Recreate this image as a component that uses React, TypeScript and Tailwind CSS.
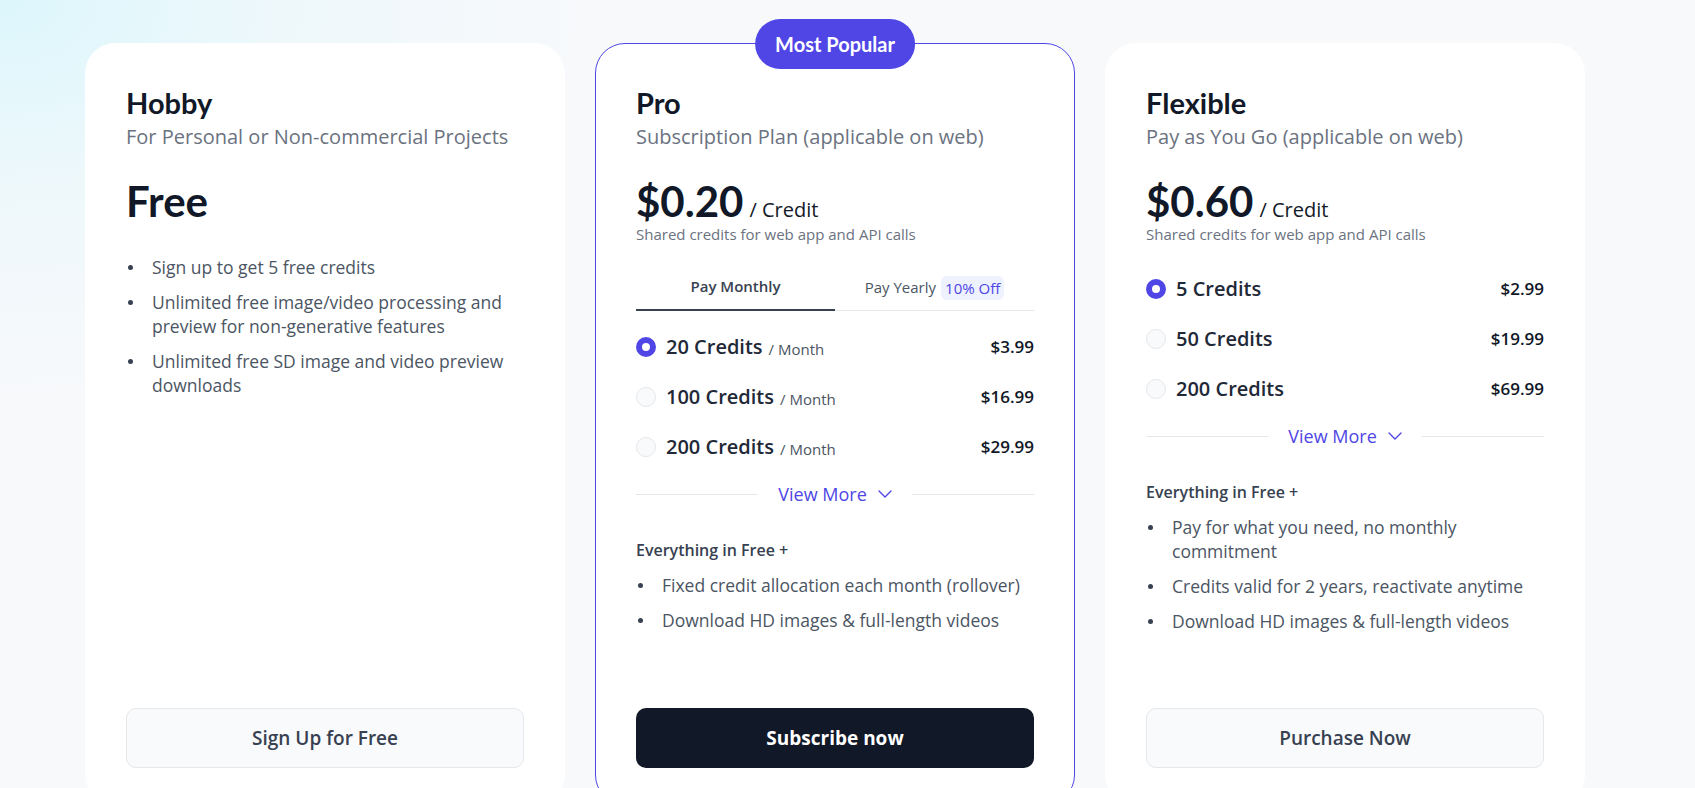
import React from "react";

type Option = { label: string; per?: string; price: string; selected?: boolean };

const proOptions: Option[] = [
  { label: "20 Credits", per: "/ Month", price: "$3.99", selected: true },
  { label: "100 Credits", per: "/ Month", price: "$16.99" },
  { label: "200 Credits", per: "/ Month", price: "$29.99" },
];

const flexOptions: Option[] = [
  { label: "5 Credits", price: "$2.99", selected: true },
  { label: "50 Credits", price: "$19.99" },
  { label: "200 Credits", price: "$69.99" },
];

function Heading({ title, subtitle }: { title: string; subtitle: string }) {
  return (
    <div>
      <h2 className="font-['Lato',sans-serif] text-[29px] leading-9 font-bold text-[#111827]">{title}</h2>
      <p className="mt-0.5 text-[20px] leading-7 text-[#6b7280]">{subtitle}</p>
    </div>
  );
}

function Price({ value, unit }: { value: string; unit?: string }) {
  return (
    <div className="mt-[29px] flex items-baseline">
      <span className="font-['Lato',sans-serif] text-[42px] leading-none font-bold text-[#111827]">{value}</span>
      {unit && <span className="ml-1.5 text-[20px] leading-none font-medium text-[#111827]">{unit}</span>}
    </div>
  );
}

function Shared() {
  return <p className="mt-[2px] text-[15px] leading-5 text-[#6b7280]">Shared credits for web app and API calls</p>;
}

function Bullets({ items, className = "" }: { items: string[]; className?: string }) {
  return (
    <ul className={`flex flex-col gap-[11px] ${className}`}>
      {items.map((t) => (
        <li key={t} className="flex text-[17.5px] leading-6 text-[#4b5563]">
          <span className="w-[26px] shrink-0">
            <span className="ml-[2px] mt-[10px] block h-[5px] w-[5px] rounded-full bg-[#374151]" />
          </span>
          <span>{t}</span>
        </li>
      ))}
    </ul>
  );
}

function Options({ options, className = "" }: { options: Option[]; className?: string }) {
  return (
    <div className={className}>
      {options.map((o) => (
        <div key={o.label} className="flex h-[50px] items-center">
          {o.selected ? (
            <span className="h-5 w-5 shrink-0 rounded-full border-[6px] border-[#4f46e5] bg-white" />
          ) : (
            <span className="h-5 w-5 shrink-0 rounded-full border border-[#e5e7eb] bg-[#f9fafb]" />
          )}
          <span className="ml-2.5 text-[20px] leading-7 font-semibold text-[#1f2937]">{o.label}</span>
          {o.per && <span className="ml-1.5 mt-1 text-[15px] leading-5 text-[#4b5563]">{o.per}</span>}
          <span className="ml-auto text-[17px] font-semibold text-[#111827]">{o.price}</span>
        </div>
      ))}
      <div className="flex h-[44px] items-center">
        <span className="h-px flex-1 bg-[#e5e7eb]" />
        <span className="mx-5 flex items-center text-[18px] leading-6 text-[#4f46e5]">
          View More
          <svg className="ml-[11px]" width="14" height="8" viewBox="0 0 14 8" fill="none">
            <polyline points="1,1 7,7 13,1" stroke="#4f46e5" strokeWidth="1.4" strokeLinecap="round" strokeLinejoin="round" />
          </svg>
        </span>
        <span className="h-px flex-1 bg-[#e5e7eb]" />
      </div>
    </div>
  );
}

function Everything() {
  return <p className="mt-[22px] text-[16px] leading-6 font-semibold text-[#374151]">Everything in Free +</p>;
}

export default function App() {
  return (
    <div className="h-[788px] w-full overflow-hidden bg-[#f8f9fb] bg-[radial-gradient(ellipse_620px_420px_at_0%_0%,#dcf6fc_0%,#eef8fb_45%,#f8f9fb_100%)] font-['Open_Sans',sans-serif]">
      <div className="flex gap-[30px] pl-[85px] pt-[43px]">
        {/* Hobby */}
        <div className="flex h-[762px] w-[480px] flex-col rounded-[30px] border border-white bg-white px-10 pb-9 pt-[41px]">
          <Heading title="Hobby" subtitle="For Personal or Non-commercial Projects" />
          <Price value="Free" />
          <Bullets
            className="mt-[33px]"
            items={[
              "Sign up to get 5 free credits",
              "Unlimited free image/video processing and preview for non-generative features",
              "Unlimited free SD image and video preview downloads",
            ]}
          />
          <button className="mt-auto h-[60px] w-full rounded-[10px] border border-[#e5e7eb] bg-[#f9fafb] text-[19px] font-semibold text-[#374151]">
            Sign Up for Free
          </button>
        </div>

        {/* Pro */}
        <div className="relative flex h-[762px] w-[480px] flex-col rounded-[30px] border border-[#4f46e5] bg-white px-10 pb-9 pt-[41px]">
          <div className="absolute left-1/2 top-[-25px] flex h-[50px] -translate-x-1/2 items-center rounded-full bg-[#4f46e5] px-5 font-['Lato',sans-serif] text-[20px] font-bold whitespace-nowrap text-white">
            Most Popular
          </div>
          <Heading title="Pro" subtitle="Subscription Plan (applicable on web)" />
          <Price value="$0.20" unit="/ Credit" />
          <Shared />
          <div className="mt-5 flex border-b border-[#e5e7eb]">
            <div className="-mb-px flex h-[47px] flex-1 items-center justify-center border-b-2 border-[#374151] text-[15px] font-semibold text-[#374151]">
              Pay Monthly
            </div>
            <div className="-mb-px flex h-[47px] flex-1 items-center justify-center text-[15px] text-[#4b5563]">
              Pay Yearly
              <span className="ml-[5px] rounded-md bg-[#eef2ff] px-1 py-0.5 text-[15px] leading-5 text-[#4f46e5]">10% Off</span>
            </div>
          </div>
          <Options className="mt-[11px]" options={proOptions} />
          <Everything />
          <Bullets
            className="mt-[11px]"
            items={["Fixed credit allocation each month (rollover)", "Download HD images & full-length videos"]}
          />
          <button className="mt-auto h-[60px] w-full rounded-[10px] bg-[#111827] text-[19px] font-bold text-white">
            Subscribe now
          </button>
        </div>

        {/* Flexible */}
        <div className="flex h-[762px] w-[480px] flex-col rounded-[30px] border border-white bg-white px-10 pb-9 pt-[41px]">
          <Heading title="Flexible" subtitle="Pay as You Go (applicable on web)" />
          <Price value="$0.60" unit="/ Credit" />
          <Shared />
          <Options className="mt-5" options={flexOptions} />
          <Everything />
          <Bullets
            className="mt-[11px]"
            items={[
              "Pay for what you need, no monthly commitment",
              "Credits valid for 2 years, reactivate anytime",
              "Download HD images & full-length videos",
            ]}
          />
          <button className="mt-auto h-[60px] w-full rounded-[10px] border border-[#e5e7eb] bg-[#f9fafb] text-[19px] font-semibold text-[#374151]">
            Purchase Now
          </button>
        </div>
      </div>
    </div>
  );
}
